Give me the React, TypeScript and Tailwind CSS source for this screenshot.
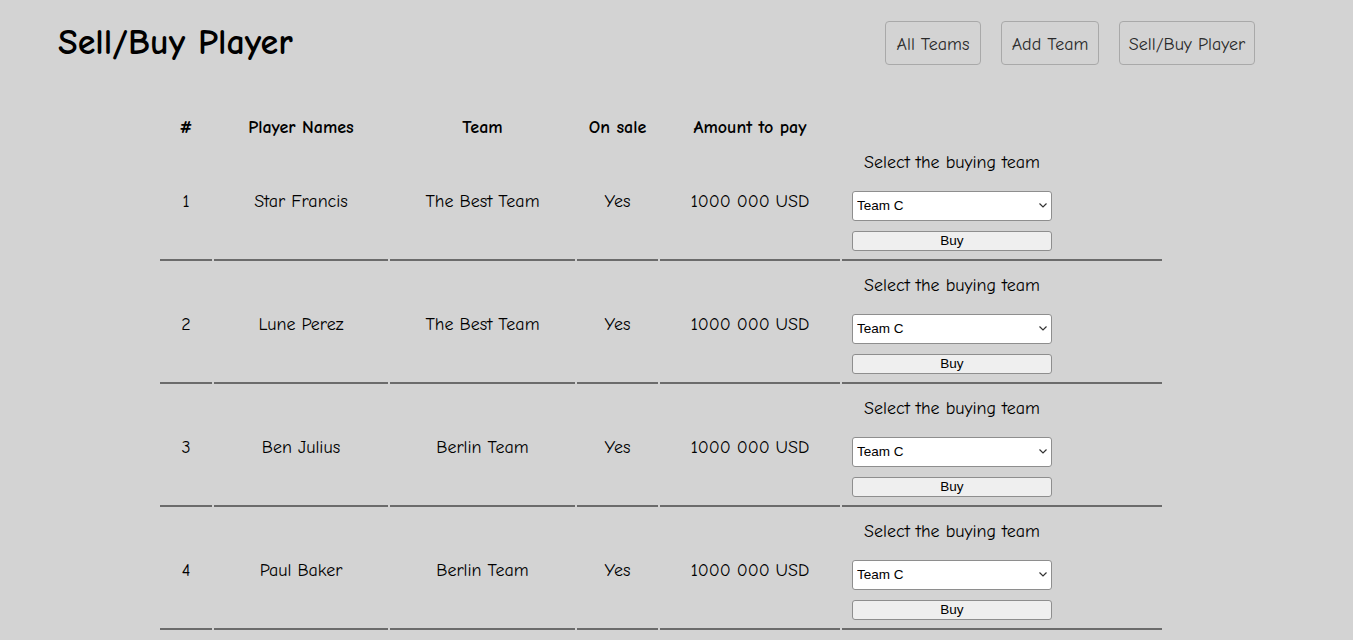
import React from "react";

type Player = {
  id: number;
  name: string;
  team: string;
  onSale: string;
  amount: string;
};

const players: Player[] = [
  { id: 1, name: "Star Francis", team: "The Best Team", onSale: "Yes", amount: "1000 000 USD" },
  { id: 2, name: "Lune Perez", team: "The Best Team", onSale: "Yes", amount: "1000 000 USD" },
  { id: 3, name: "Ben Julius", team: "Berlin Team", onSale: "Yes", amount: "1000 000 USD" },
  { id: 4, name: "Paul Baker", team: "Berlin Team", onSale: "Yes", amount: "1000 000 USD" },
];

const comic = "font-['Comic_Sans_MS','Comic_Neue',Lato,sans-serif]";
const cell = "border-b-2 border-[#6b6b6b] text-center align-middle p-0 pt-[4px]";
const head = "h-[20px] leading-5 p-0";

const NavButton = ({ label, width }: { label: string; width: string }) => (
  <button
    className={`${width} h-[44px] pt-[2px] rounded-[4px] border border-[#a9a9a9] bg-[#d3d3d3] text-[18px] text-[#2a2a2a]`}
  >
    {label}
  </button>
);

const BuyCell = () => (
  <td className="border-b-2 border-[#6b6b6b] align-top pt-[11px] pb-[8px] pl-[10px]">
    <div className="w-[200px] flex flex-col items-stretch">
      <p className="text-[18px] leading-6 text-center mb-[16px]">Select the buying team</p>
      <div className="relative h-[30px]">
        <select
          defaultValue="C"
          className="appearance-none w-full h-[30px] rounded-[3px] border border-[#8e8e8e] bg-white pl-[4px] text-[13.5px] text-black font-['Liberation_Sans',Arial,sans-serif] outline-none"
        >
          <option value="A">Team A</option>
          <option value="B">Team B</option>
          <option value="C">Team C</option>
        </select>
        <svg
          className="absolute right-[4px] top-[11px] pointer-events-none"
          width="10"
          height="7"
          viewBox="0 0 10 7"
        >
          <path d="M1.5 1.5 L5 5 L8.5 1.5" fill="none" stroke="#333" strokeWidth="1.2" />
        </svg>
      </div>
      <button className="mt-[10px] h-[20px] w-full rounded-[3px] border border-[#8e8e8e] bg-[#efefef] text-[13.5px] leading-none text-black font-['Liberation_Sans',Arial,sans-serif]">
        Buy
      </button>
    </div>
  </td>
);

export default function App() {
  return (
    <div className={`min-h-screen bg-[#d3d3d3] text-black ${comic}`}>
      <header className="flex items-center justify-between pl-[58px] pr-[98px] pt-[21px]">
        <h1 className="text-[36px] font-bold leading-none">Sell/Buy Player</h1>
        <nav className="flex gap-[20px]">
          <NavButton label="All Teams" width="w-[96px]" />
          <NavButton label="Add Team" width="w-[98px]" />
          <NavButton label="Sell/Buy Player" width="w-[136px]" />
        </nav>
      </header>

      <table className="table-fixed border-separate border-spacing-[2px] w-[1006px] ml-[158px] mt-[51px]">
        <thead>
          <tr className="text-[18px] font-bold">
            <th className={`w-[52px] ${head}`}>#</th>
            <th className={`w-[174px] ${head}`}>Player Names</th>
            <th className={`w-[185px] ${head}`}>Team</th>
            <th className={`w-[81px] ${head}`}>On sale</th>
            <th className={`w-[180px] ${head}`}>Amount to pay</th>
            <th className={`w-[320px] ${head}`}></th>
          </tr>
        </thead>
        <tbody className="text-[18px]">
          {players.map((p) => (
            <tr key={p.id}>
              <td className={cell}>{p.id}</td>
              <td className={cell}>{p.name}</td>
              <td className={cell}>{p.team}</td>
              <td className={cell}>{p.onSale}</td>
              <td className={cell}>{p.amount}</td>
              <BuyCell />
            </tr>
          ))}
        </tbody>
      </table>
    </div>
  );
}
